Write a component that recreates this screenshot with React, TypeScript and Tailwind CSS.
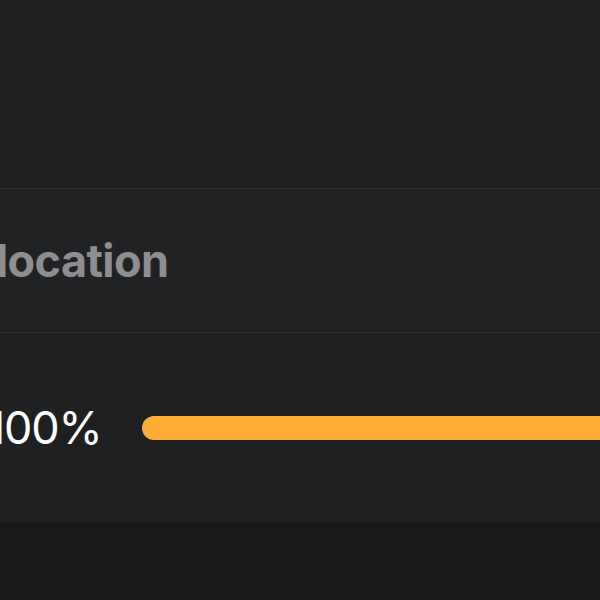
export default function App() {
  return (
    <div className="w-[600px] h-[600px] overflow-hidden flex flex-col bg-[#18191b] font-['Inter',sans-serif]">
      <div className="h-[188px] bg-[#1f2022]" />
      <div className="h-[145px] flex items-center border-y border-[#303133] bg-[#212224] overflow-hidden">
        <span className="-ml-[4px] text-[45px] font-bold text-[#8e8e90] tracking-[-0.6px] leading-none">
          location
        </span>
      </div>
      <div className="h-[189px] flex items-center bg-[#1f2022] overflow-hidden">
        <span className="-ml-[13px] text-[45px] text-white leading-none tracking-[-1.2px] w-[155px] shrink-0">
          100%
        </span>
        <div className="flex-1 h-[24px] rounded-l-full bg-[#fdac35] ring-1 ring-[#2a1c10]" />
      </div>
      <div className="flex-1" />
    </div>
  );
}
